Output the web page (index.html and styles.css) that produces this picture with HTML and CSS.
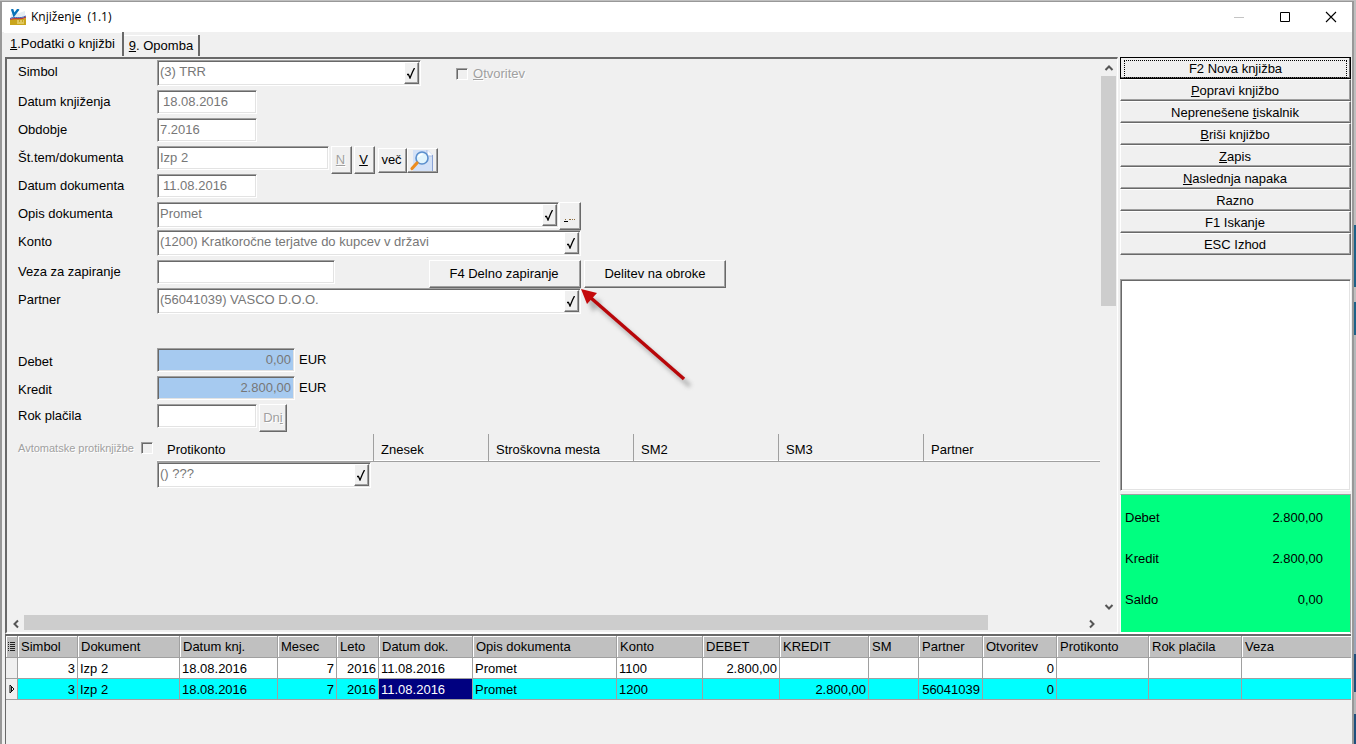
FILE: index.html
```html
<!DOCTYPE html>
<html lang="sl">
<head>
<meta charset="utf-8">
<title>Knjiženje (1.1)</title>
<link rel="stylesheet" href="styles.css">
</head>
<body>
<svg class="sprite" aria-hidden="true">
  <symbol id="tick" viewBox="0 0 8 11"><path d="M7.500 0 5.500 4 3 10 1.500 6.500M0 6.500h2" fill="none" stroke="#000" stroke-width="1.300"/></symbol>
</svg>
<div class="window">
  <header class="titlebar">
    <svg class="app-icon" viewBox="0 0 16 16" aria-hidden="true">
      <path d="M1 5 9 4l6-2v9H1z" fill="#e4eef4"/>
      <path d="M0 11c4-3 9 0 16-2v7H0z" fill="#c9a51c"/>
      <path d="M0 10.500c5-2.500 9 1 16-2.500" fill="none" stroke="#c03a34" stroke-width="1.200"/>
      <path d="M0 9.500c5-2.500 9 1 16-2.500" fill="none" stroke="#3f62b5"/>
      <path d="m2 0 2 6L8.500 0" fill="none" stroke="#0873b8" stroke-width="2.400"/>
      <path d="M7 12h2M10 12h2M13 12h1M7 14h7" stroke="#f7eaa0"/>
    </svg>
    <h1 class="title">Knjiženje&nbsp; (1.1)</h1>
    <button class="win-btn" aria-label="Minimiraj"><svg viewBox="0 0 12 12"><path d="M1 6.500h10" stroke="#c4c4c4"/></svg></button>
    <button class="win-btn" aria-label="Povečaj"><svg viewBox="0 0 12 12"><path d="M1.500 1.500h9v9h-9z" fill="none" stroke="#000"/></svg></button>
    <button class="win-btn" aria-label="Zapri"><svg viewBox="0 0 12 12"><path d="m1 1 10 10M11 1 1 11" stroke="#000" stroke-width="1.100"/></svg></button>
  </header>

  <nav class="tabs" role="tablist">
    <button class="tab tab-active" role="tab" aria-selected="true"><u>1</u>.Podatki o knjižbi</button>
    <button class="tab" role="tab" aria-selected="false"><u>9</u>. Opomba</button>
  </nav>

  <main class="main">
    <section class="panel">
      <form class="form">
        <div class="row row-tall">
          <label class="label" for="simbol">Simbol</label>
          <div class="combo w-simbol"><input id="simbol" value="(3) TRR"><button type="button" class="pick" aria-label="Izberi simbol"><svg><use href="#tick"/></svg></button></div>
          <label class="check"><input type="checkbox"><span><u>O</u>tvoritev</span></label>
        </div>
        <div class="row">
          <label class="label" for="datumk">Datum knjiženja</label>
          <input class="field w-date indent" id="datumk" value="18.08.2016">
        </div>
        <div class="row">
          <label class="label" for="obdobje">Obdobje</label>
          <input class="field w-date" id="obdobje" value="7.2016">
        </div>
        <div class="row">
          <label class="label" for="stdok">Št.tem/dokumenta</label>
          <input class="field w-doc" id="stdok" value="Izp 2">
          <div class="tools">
            <button type="button" class="btn btn-letter dim"><u>N</u></button>
            <button type="button" class="btn btn-letter"><u>V</u></button>
            <div class="pair">
              <button type="button" class="btn btn-more">več</button>
              <button type="button" class="btn btn-find" aria-label="Predogled">
                <svg viewBox="0 0 28 22"><path d="M5 1h15l5 5v16H5z" fill="#d3e1f7"/><path d="M19 1v6h6" fill="#fff" stroke="#a9bde0"/><path d="M24.500 6v16" stroke="#8aa3d6"/><circle cx="14" cy="9" r="6" fill="#e2f5fd" stroke="#5b8fcd" stroke-width="1.600"/><path d="M10.500 8q1-3 4-2.500" fill="none" stroke="#fff" stroke-width="1.500"/><path d="m9 14-5 5.500" stroke="#ec8c1e" stroke-width="3.200" stroke-linecap="round"/></svg>
              </button>
            </div>
          </div>
        </div>
        <div class="row">
          <label class="label" for="datumd">Datum dokumenta</label>
          <input class="field w-date indent" id="datumd" value="11.08.2016">
        </div>
        <div class="row">
          <label class="label" for="opis">Opis dokumenta</label>
          <div class="combo w-opis"><input id="opis" value="Promet"><button type="button" class="pick" aria-label="Izberi opis"><svg><use href="#tick"/></svg></button></div>
          <button type="button" class="btn btn-dots" aria-label="Več opisov"><svg viewBox="0 0 12 3"><path d="M0 2.500h4" stroke="#000"/><path d="M1 .5h1M5 .5h2M8 .5h1M10 .5h1" stroke="#8c6c3c"/></svg></button>
        </div>
        <div class="row row-tall">
          <label class="label" for="konto">Konto</label>
          <div class="combo w-wide"><input id="konto" value="(1200) Kratkoročne terjatve do kupcev v državi"><button type="button" class="pick" aria-label="Izberi konto"><svg><use href="#tick"/></svg></button></div>
        </div>
        <div class="row">
          <label class="label" for="veza">Veza za zapiranje</label>
          <div class="link-line">
            <input class="field w-veza" id="veza">
            <button type="button" class="btn btn-close">F4 Delno zapiranje</button>
          </div>
          <button type="button" class="btn btn-split">Delitev na obroke</button>
        </div>
        <div class="row row-gap">
          <label class="label" for="partner">Partner</label>
          <div class="combo w-wide"><input id="partner" value="(56041039) VASCO D.O.O."><button type="button" class="pick" aria-label="Izberi partnerja"><svg><use href="#tick"/></svg></button></div>
        </div>
        <div class="row">
          <label class="label label-low" for="debet">Debet</label>
          <input class="field amount" id="debet" value="0,00"><span class="unit">EUR</span>
        </div>
        <div class="row">
          <label class="label label-low" for="kredit">Kredit</label>
          <input class="field amount" id="kredit" value="2.800,00"><span class="unit">EUR</span>
        </div>
        <div class="row row-tall">
          <label class="label" for="rok">Rok plačila</label>
          <input class="field w-date" id="rok">
          <button type="button" class="btn btn-days dim">Dn<u>i</u></button>
        </div>
        <div class="counter">
          <label class="auto"><span>Avtomatske protiknjižbe</span><input type="checkbox"></label>
          <div class="counter-grid">
            <div class="counter-head">
              <span>Protikonto</span><span>Znesek</span><span>Stroškovna mesta</span><span>SM2</span><span>SM3</span><span>Partner</span>
            </div>
            <div class="combo w-counter"><input aria-label="Protikonto" value="() ???"><button type="button" class="pick" aria-label="Izberi protikonto"><svg><use href="#tick"/></svg></button></div>
          </div>
        </div>
        <svg class="arrow" viewBox="0 0 116 104" aria-hidden="true">
          <g class="arrow-shadow"><path d="m17 17 92 80" stroke="#888" stroke-width="4"/><path d="m5 8 16 4-9 11z" fill="#888"/></g>
          <path d="m10 9 93 81" stroke="#b8070a" stroke-width="3.500"/><path d="m0 0 16 4-10 11z" fill="#c40a0c"/>
        </svg>
      </form>
      <div class="vscroll">
        <button class="sbtn" aria-label="Gor"><svg viewBox="0 0 10 10"><path d="m1.500 7 3.500-3.500L8.500 7"/></svg></button>
        <div class="vtrack"><div class="vthumb"></div></div>
        <button class="sbtn" aria-label="Dol"><svg viewBox="0 0 10 10"><path d="M1.500 3 5 6.500 8.500 3"/></svg></button>
      </div>
      <div class="hscroll">
        <button class="sbtn" aria-label="Levo"><svg viewBox="0 0 10 10"><path d="M7 1.500 3.500 5 7 8.500"/></svg></button>
        <div class="htrack"><div class="hthumb"></div></div>
        <button class="sbtn" aria-label="Desno"><svg viewBox="0 0 10 10"><path d="M3 1.500 6.500 5 3 8.500"/></svg></button>
      </div>
    </section>

    <aside class="side">
      <div class="actions">
        <button class="action action-default"><span>F2 Nova knjižba</span></button>
        <button class="action"><u>P</u>opravi knjižbo</button>
        <button class="action">Neprenešene <u>t</u>iskalnik</button>
        <button class="action"><u>B</u>riši knjižbo</button>
        <button class="action"><u>Z</u>apis</button>
        <button class="action"><u>N</u>aslednja napaka</button>
        <button class="action">Razno</button>
        <button class="action">F1 Iskanje</button>
        <button class="action">ESC Izhod</button>
      </div>
      <div class="notes"></div>
      <dl class="totals">
        <div><dt>Debet</dt><dd>2.800,00</dd></div>
        <div><dt>Kredit</dt><dd>2.800,00</dd></div>
        <div><dt>Saldo</dt><dd>0,00</dd></div>
      </dl>
    </aside>
  </main>

  <section class="grid">
    <table>
      <colgroup><col class="c12"><col class="c60"><col class="c102"><col class="c98"><col class="c59"><col class="c42"><col class="c94"><col class="c144"><col class="c86"><col class="c77"><col class="c89"><col class="c50"><col class="c64"><col class="c74"><col class="c92"><col class="c93"><col></colgroup>
      <thead>
        <tr><th class="mark"><svg viewBox="0 0 8 10"><path d="M0 .5h1M2 .5h5M0 2.500h1M2 2.500h5M0 4.500h1M2 4.500h5M0 6.500h1M2 6.500h5M0 8.500h1M2 8.500h5" stroke="#222"/></svg></th><th>Simbol</th><th>Dokument</th><th>Datum knj.</th><th>Mesec</th><th>Leto</th><th>Datum dok.</th><th>Opis dokumenta</th><th>Konto</th><th>DEBET</th><th>KREDIT</th><th>SM</th><th>Partner</th><th>Otvoritev</th><th>Protikonto</th><th>Rok plačila</th><th>Veza</th></tr>
      </thead>
      <tbody>
        <tr><td class="mark"></td><td class="num">3</td><td>Izp 2</td><td>18.08.2016</td><td class="num">7</td><td class="num">2016</td><td>11.08.2016</td><td>Promet</td><td>1100</td><td class="num">2.800,00</td><td></td><td></td><td></td><td class="num">0</td><td></td><td></td><td></td></tr>
        <tr class="current"><td class="mark"><svg viewBox="0 0 8 10"><path d="M2 1v8l4-4zM3.500 3v4" fill="none" stroke="#111"/></svg></td><td class="num">3</td><td>Izp 2</td><td>18.08.2016</td><td class="num">7</td><td class="num">2016</td><td class="picked">11.08.2016</td><td>Promet</td><td>1200</td><td></td><td class="num">2.800,00</td><td></td><td class="num">56041039</td><td class="num">0</td><td></td><td></td><td></td></tr>
      </tbody>
    </table>
  </section>
</div>
</body>
</html>
```
FILE: styles.css
```css
* { box-sizing: border-box; }

body {
  margin: 0;
  min-height: 100vh;
  display: flex;
  padding: 1px 2px 0 0;
  background: linear-gradient(#bfbfbf 0 225px, #1c6288 225px 287px, #bfbfbf 287px 302px, #1c6288 302px 335px, #b4b8ba 335px 500px, #9aa6b8 640px 654px, #1d4f7c 654px 692px, #b4b8ba 692px 714px, #1d4f7c 714px);
  color: #000;
  font: 13px/16px "Liberation Sans", Arial, sans-serif;
}

button, input { font: inherit; color: inherit; margin: 0; border-radius: 0; }
button { padding: 0; background: #f0f0f0; border: 0; white-space: nowrap; }
svg { display: block; }
.sprite { position: absolute; width: 0; height: 0; }

.window {
  flex: 1;
  min-width: 0;
  display: flex;
  flex-direction: column;
  background: #f0f0f0;
  border: solid #989898;
  border-width: 1px 2px 0;
}

.titlebar {
  display: flex;
  align-items: center;
  height: 30px;
  padding-left: 8px;
  background: #fff;
}
.app-icon { width: 16px; height: 16px; margin-right: 5px; }
.title { flex: 1; margin: 0; font: 12px/16px "Open Sans", sans-serif; }
.win-btn { width: 46px; height: 28px; padding-left: 4px; display: grid; place-items: center; background: #fff; }
.win-btn svg { width: 12px; height: 12px; }

.tabs { display: flex; align-items: flex-end; height: 24px; padding-left: 2px; }
.tab { height: 21px; padding: 0 5px; border-right: 2px solid #696969; box-shadow: inset 0 1px #fff; }
.tab-active { height: 24px; padding: 0 7px 0 6px; }

.main { display: flex; gap: 2px; height: 578px; padding: 1px 1px 0 3px; }

.panel {
  flex: 1;
  min-width: 0;
  display: grid;
  grid-template: minmax(0, 1fr) 17px / minmax(0, 1fr) 17px;
  border: solid;
  border-width: 2px 1px 2px 2px;
  border-color: #696969 #fff #fff #696969;
}
.form { position: relative; padding: 1px 0 0 11px; overflow: hidden; }
.row { display: flex; align-items: flex-start; height: 28px; }
.row-tall { height: 30px; }
.row-gap { height: 60px; }
.label { width: 139px; line-height: 24px; }
.label-low { line-height: 27px; }

.field, .combo, .notes {
  border: 1px solid;
  border-color: #a0a0a0 #fff #fff #a0a0a0;
  box-shadow: inset 1px 1px #696969, inset -1px -1px #e3e3e3;
  background: #fff;
}
.field { height: 24px; padding: 0 2px 2px; color: #777; }
.combo { display: flex; height: 26px; padding: 1px; }
.combo input { flex: 1; min-width: 0; padding: 0 1px 3px; border: 0; background: none; color: #777; }
.indent { padding-left: 5px; }
.w-simbol { width: 264px; }
.w-date { width: 100px; }
.w-doc { width: 172px; }
.w-opis { width: 402px; }
.w-wide { width: 424px; }
.w-veza { width: 178px; }
.w-counter { width: 214px; }
.amount { width: 138px; padding-right: 3px; background: #a6caf0; text-align: right; }
.unit { padding-left: 4px; line-height: 24px; }

.btn, .pick, .action {
  border: 1px solid;
  border-color: #fff #696969 #696969 #fff;
  box-shadow: inset -1px -1px #a0a0a0;
}
.pick { width: 15px; padding-right: 1px; display: grid; place-items: center; }
.pick svg { width: 8px; height: 11px; }
.dim { color: #a0a0a0; text-shadow: 1px 1px #fff; }
.tools { display: flex; align-items: center; gap: 2px; margin-left: 2px; }
.pair { display: flex; }
.btn-letter { width: 21px; height: 28px; padding-right: 2px; }
.btn-more { width: 29px; height: 25px; margin-left: 1px; padding-right: 2px; }
.btn-find { width: 31px; height: 25px; }
.btn-find svg { width: 28px; height: 22px; }
.btn-dots { width: 22px; height: 28px; padding: 8px 0 0 4px; }
.btn-dots svg { width: 12px; height: 3px; }
.link-line { display: flex; justify-content: space-between; width: 424px; margin-right: 3px; }
.btn-close { width: 152px; height: 28px; padding-right: 2px; }
.btn-split { width: 142px; height: 28px; }
.btn-days { width: 28px; height: 28px; margin-left: 2px; }

input[type="checkbox"] {
  appearance: none;
  width: 12px;
  height: 12px;
  border: 1px solid;
  border-color: #a0a0a0 #fff #fff #a0a0a0;
  box-shadow: inset 1px 1px #696969;
}
.check { display: flex; align-items: center; gap: 5px; margin: 6px 0 0 35px; color: #a0a0a0; text-shadow: 1px 1px #fff; }

.counter { display: flex; align-items: flex-start; }
.auto { display: flex; justify-content: space-between; align-items: center; width: 135px; height: 27px; margin-right: 4px; color: #a0a0a0; font-size: 11px; text-shadow: 1px 1px #fff; }
.counter-grid { flex: 1; }
.counter-head {
  display: grid;
  grid-template-columns: 217px 115px 145px 145px 145px 1fr;
  height: 28px;
  border-bottom: 1px solid #a0a0a0;
  box-shadow: inset 0 -1px #fff;
  line-height: 16px;
}
.counter-head span { padding: 8px 0 0 7px; border-right: 1px solid #a0a0a0; }
.counter-head span:first-child { padding-left: 10px; }
.counter-head span:last-child { border-right: 0; }

/* callout pointing at the partial closing button */
.arrow { position: absolute; left: 574px; top: 230px; width: 116px; height: 104px; pointer-events: none; }
.arrow-shadow { filter: blur(2px); opacity: .6; }

.sbtn { width: 17px; height: 17px; display: grid; place-items: center; }
.sbtn svg { width: 10px; height: 10px; fill: none; stroke: #555; stroke-width: 2; }
.vscroll { display: flex; flex-direction: column; }
.vtrack, .htrack { flex: 1; }
.vthumb { width: 15px; height: 44%; margin-left: 1px; background: #cdcdcd; }
.hscroll { display: flex; margin-right: 17px; grid-column: 1 / -1; }
.hthumb { width: 91%; height: 15px; background: #cdcdcd; }

.side { width: 231px; display: flex; flex-direction: column; }
.actions { margin-bottom: 24px; }
.action { display: block; width: 100%; height: 22px; padding: 1px 1px 0 0; }
.action-default { padding: 1px; border-color: #000; box-shadow: inset -1px -1px #696969; }
.action-default span { display: block; margin: 1px 2px; border: 1px dotted #000; }
.notes { flex: 1; margin-bottom: 3px; }
.totals {
  display: flex;
  flex-direction: column;
  gap: 25px;
  height: 140px;
  margin: 0;
  padding: 15px 27px 0 4px;
  background: #00ff80;
  border: solid;
  border-width: 1px 1px 2px;
  border-color: #a0a0a0 #a0a0a0 #fff #fff;
}
.totals div { display: flex; justify-content: space-between; }
.totals dd { margin: 0; }

.grid { flex: 1; margin: 0 1px 0 3px; border: solid #696969; border-width: 2px 0 0 1px; overflow: hidden; }
table { width: 100%; table-layout: fixed; border-collapse: separate; border-spacing: 0; }
th, td { height: 21px; padding: 1px 2px 0; border: solid #a0a0a0; border-width: 0 1px 1px 0; white-space: nowrap; overflow: hidden; }
th { height: 22px; padding-left: 3px; background: #c0c0c0; font-weight: normal; text-align: left; box-shadow: inset 1px 1px #fff; }
td { background: #fff; }
th:last-child, td:last-child { border-right: 0; }
.num { text-align: right; }
.mark, td.mark { padding: 0 2px; background: #f0f0f0; }
th.mark { background: #c0c0c0; }
.mark svg { width: 8px; height: 10px; }
.current td { background: #0ff; }
.current td.mark { background: #f0f0f0; }
.current td.picked { background: #000080; color: #fff; }

.c12 { width: 12px; }
.c42 { width: 42px; }
.c50 { width: 50px; }
.c59 { width: 59px; }
.c60 { width: 60px; }
.c64 { width: 64px; }
.c74 { width: 74px; }
.c77 { width: 77px; }
.c86 { width: 86px; }
.c89 { width: 89px; }
.c92 { width: 92px; }
.c93 { width: 93px; }
.c94 { width: 94px; }
.c98 { width: 98px; }
.c102 { width: 102px; }
.c144 { width: 144px; }
```
